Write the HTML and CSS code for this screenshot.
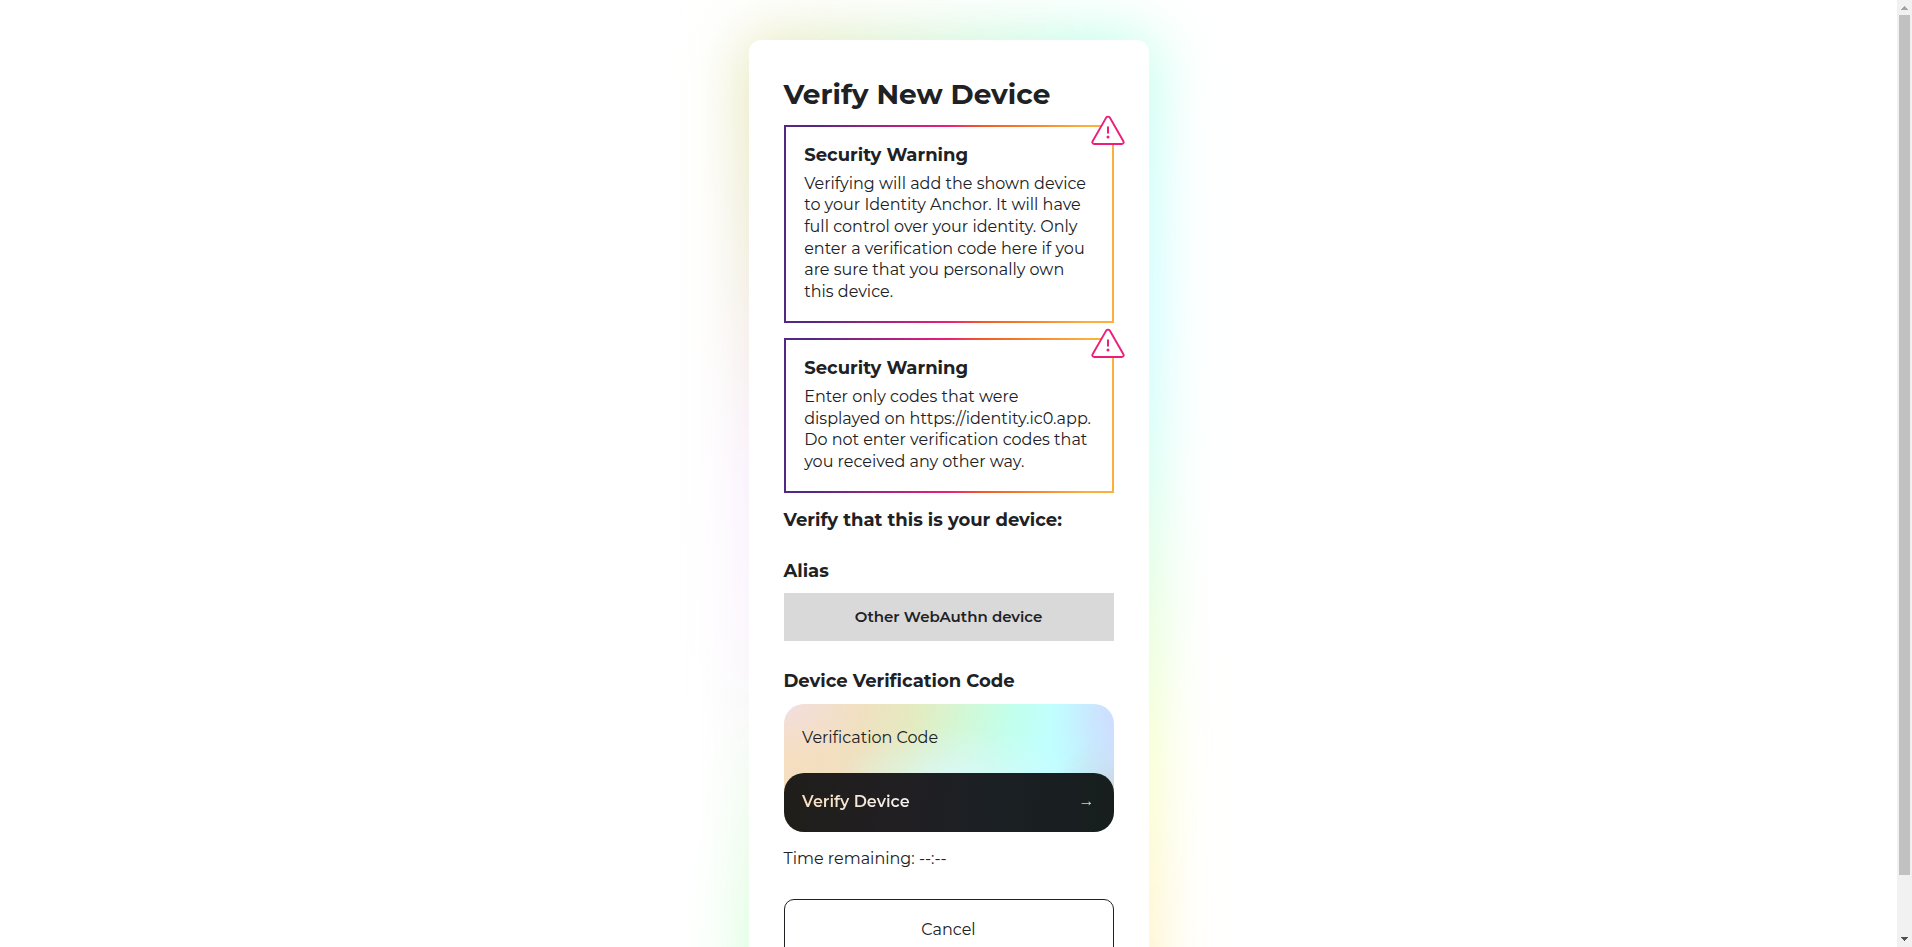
FILE: index.html
```html
<!DOCTYPE html>
<html lang="en">
<head>
<meta charset="utf-8">
<title>Verify New Device</title>
<link rel="stylesheet" href="styles.css">
</head>
<body>
<main class="page">
  <section class="card">
    <div class="glow"></div>
    <div class="content">
      <h1 class="title">Verify New Device</h1>
      <div class="warning">
        <svg class="warning-icon" width="34" height="31" viewBox="0 0 34 31"><path d="M15.2 2.6a2.1 2.1 0 0 1 3.6 0L32.4 26.3a1.8 1.8 0 0 1-1.6 2.7H3.2a1.8 1.8 0 0 1-1.6-2.7Z" fill="#fff" stroke="#ed1e79" stroke-width="1.9" stroke-linejoin="round"/><path d="M17 12.2v5.6" stroke="#ed1e79" stroke-width="2" stroke-linecap="round"/><circle cx="17" cy="22" r="1.5" fill="#ed1e79"/></svg>
        <h2 class="heading">Security Warning</h2>
        <p class="text">Verifying will add the shown device to your Identity Anchor. It will have full control over your identity. Only enter a verification code here if you are sure that you personally own this device.</p>
      </div>
      <div class="warning">
        <svg class="warning-icon" width="34" height="31" viewBox="0 0 34 31"><path d="M15.2 2.6a2.1 2.1 0 0 1 3.6 0L32.4 26.3a1.8 1.8 0 0 1-1.6 2.7H3.2a1.8 1.8 0 0 1-1.6-2.7Z" fill="#fff" stroke="#ed1e79" stroke-width="1.9" stroke-linejoin="round"/><path d="M17 12.2v5.6" stroke="#ed1e79" stroke-width="2" stroke-linecap="round"/><circle cx="17" cy="22" r="1.5" fill="#ed1e79"/></svg>
        <h2 class="heading">Security Warning</h2>
        <p class="text">Enter only codes that were displayed on https://identity.ic0.app. Do not enter verification codes that you received any other way.</p>
      </div>
      <h2 class="heading verify">Verify that this is your device:</h2>
      <h2 class="heading label">Alias</h2>
      <div class="alias">Other WebAuthn device</div>
      <h2 class="heading label code-label">Device Verification Code</h2>
      <div class="field">
        <div class="input">Verification Code</div>
        <button class="submit"><span class="submit-text"><span>Verify Device</span><span class="arrow">→</span></span></button>
      </div>
      <p class="text time">Time remaining: --:--</p>
      <button class="cancel">Cancel</button>
    </div>
  </section>
</main>
<aside class="scrollbar">
  <svg width="15" height="15"><path d="M7 6h1v1h1v1h1v1h1v1H4V9h1V8h1V7h1z" fill="#a3a3a3"/></svg>
  <div class="thumb"></div>
  <svg width="15" height="15"><path d="M4 5h7v1h-1v1H9v1H8v1H7V8H6V7H5V6H4z" fill="#505050"/></svg>
</aside>
</body>
</html>
```
FILE: styles.css
```css
* { box-sizing: border-box; }
body {
  margin: 0;
  height: 947px;
  overflow: hidden;
  display: flex;
  background: #fff;
  color: #202124;
  font: 400 16px/21.6px Montserrat, "Liberation Sans", sans-serif;
}
h1, h2, p { margin: 0; }
button { font: inherit; color: inherit; }
.page { flex: 1; height: 947px; overflow: hidden; padding-top: 40px; }
.card { position: relative; width: 400px; height: 1020px; margin: 0 auto; }
.glow { position: absolute; inset: 0; filter: blur(32px); }
.glow::before, .glow::after { content: ""; position: absolute; inset: -2px; }
.glow::before {
  background: linear-gradient(#e6e5b0 0, #e5e3b4 10%, #eee3d2 25%, #f8e8fc 42%, #fbeeff 58%, #f0f8f0 70%, #d0ffd4 88%, #c8ffd0);
}
.glow::after {
  background: linear-gradient(#b4ffe4 0, #b8fff6 12%, #bbfdff 28%, #c0fff0 40%, #dcffc8 58%, #f8ffb4 72%, #fff1b6 86%, #ffe8b8);
  mask-image: linear-gradient(90deg, transparent 5%, #000 85%);
}
.content {
  position: relative;
  height: 100%;
  padding: 36.6px 35px 0;
  background: #fff;
  border-radius: 12px;
}
.title { font-size: 28px; line-height: 34px; font-weight: 700; margin-bottom: 14.4px; }
.heading { font-size: 18px; line-height: 22px; font-weight: 700; }
.warning {
  position: relative;
  margin-bottom: 15.3px;
  padding: 17px 17px 18.6px 18.7px;
  border: 2px solid;
  border-image: linear-gradient(90deg, #522785 8%, #ed1e79 50%, #f15a24 60%, #fbb03b 92%) 1;
}
.warning .heading { margin-bottom: 6.8px; }
.warning-icon { position: absolute; top: -12px; right: -13px; }
.verify { margin-top: 15.8px; margin-bottom: 29px; }
.label { margin-bottom: 11.4px; }
.alias {
  height: 48px;
  margin-bottom: 29px;
  background: #d9d9d9;
  font-size: 15px;
  line-height: 48px;
  font-weight: 600;
  text-align: center;
}
.field {
  height: 128.6px;
  display: flex;
  flex-direction: column;
  justify-content: space-between;
  border-radius: 20px;
  background:
    radial-gradient(ellipse 75px 100px at 103% 10%, #d0daff 0, #d0daffb0 35%, #d0daff30 75%, #d0daff00),
    radial-gradient(ellipse 64px 50px at 102% 62%, #c8d8dc 0, #c8d8dc70 50%, #c8d8dc00),
    radial-gradient(ellipse 120px 60px at 52% 64%, #dcf8fc 0, #dcf8fc70 50%, #dcf8fc00),
    radial-gradient(ellipse 80px 56px at 0 0, #f2dee0 0, #f2dee060 55%, #f2dee000),
    linear-gradient(103deg, #f6dec0 4%, #f0e0c0 22%, #e4ebc0 37%, #d2f8d6 51%, #c2ffec 64%, #c0ffff 76%, #c0faff 90%, #c4f0ff);
}
.input { height: 69px; padding: 24.8px 18.6px 0; line-height: 20px; }
.submit {
  height: 59.6px;
  padding: 0 19px 0 18.6px;
  border: 0;
  border-radius: 20px;
  background: linear-gradient(95deg, #201e1a, #201f23 40%, #1b2024 62%, #171e1d);
}
.submit-text {
  display: flex;
  justify-content: space-between;
  line-height: 20px;
  font-weight: 600;
  color: transparent;
  background: linear-gradient(90deg, #f8dfc0, #f2f0f2 38%, #d0f6fa 70%, #b8f0e4);
  background-clip: text;
}
.arrow { font-family: "Liberation Sans", sans-serif; font-weight: 400; line-height: 18px; }
.time { margin-top: 16px; margin-bottom: 29.4px; }
.cancel {
  display: block;
  width: 100%;
  height: 61px;
  border: 1px solid #202124;
  border-radius: 10px;
  background: #fff;
}
.scrollbar {
  width: 15px;
  display: flex;
  flex-direction: column;
  background: #f1f1f1;
}
.scrollbar svg { display: block; }
.thumb { flex: none; width: 11px; height: 860px; margin: 0 2px 57px; background: #c1c1c1; }
```
